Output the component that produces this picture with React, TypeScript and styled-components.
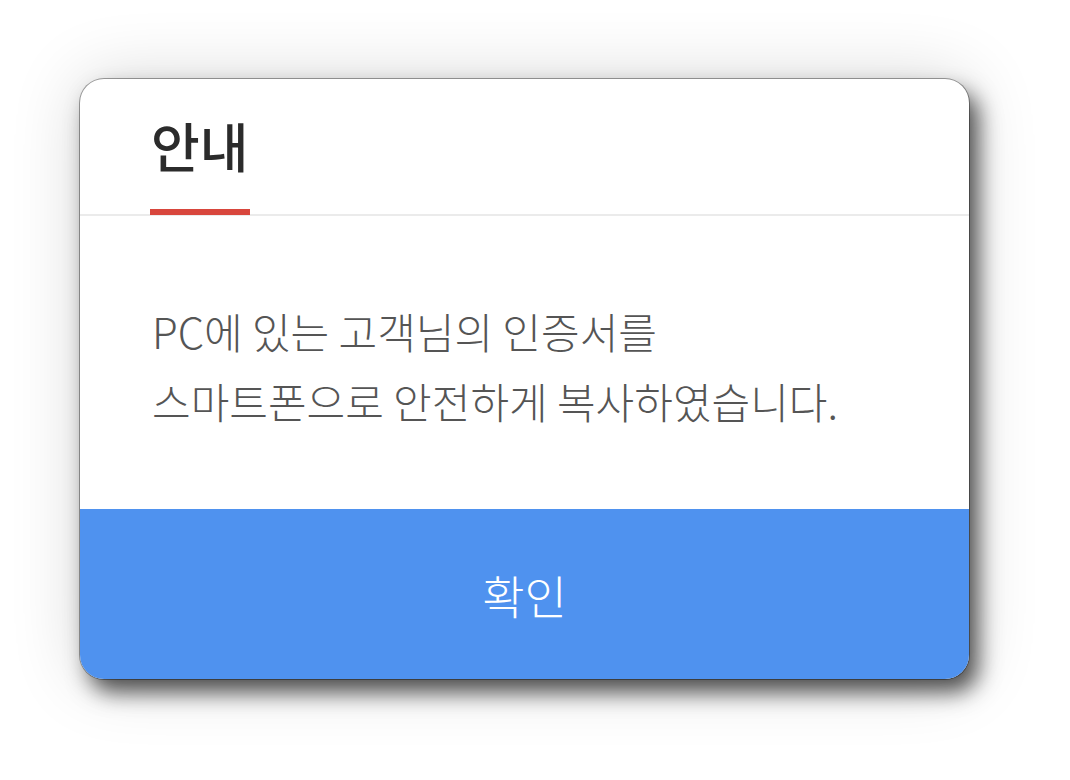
import styled, { createGlobalStyle } from 'styled-components';

const GlobalStyle = createGlobalStyle`
    html, body {
        margin: 0;
        padding: 0;
        background: #fff;
    }
    body {
        font-family: 'Noto Sans CJK KR', 'Noto Sans', sans-serif;
    }
`;

const Page = styled.div`
    width: 1070px;
    height: 780px;
    padding: 79px 0 0 80px;
    box-sizing: border-box;
    background: #fff;
`;

const Dialog = styled.div`
    width: 889px;
    height: 600px;
    border-radius: 24px;
    background: #fff;
    overflow: hidden;
    display: flex;
    flex-direction: column;
    box-shadow:
        0 0 0 1px rgba(0, 0, 0, 0.35),
        9px 13px 22px rgba(0, 0, 0, 0.68),
        0 0 70px rgba(0, 0, 0, 0.16);
`;

const Header = styled.div`
    height: 135px;
    border-bottom: 2px solid #ebebeb;
    display: flex;
    align-items: flex-end;
    padding-left: 70px;
`;

const Tab = styled.div`
    font-size: 53px;
    font-weight: 500;
    line-height: 1;
    color: #2b2b2b;
    padding: 0 1px 37px;
    margin-bottom: -1px;
    border-bottom: 6px solid #d8463d;
`;

const Body = styled.div`
    flex: 1;
    display: flex;
    flex-direction: column;
    justify-content: center;
    padding: 6px 0 0 72px;
`;

const Message = styled.p`
    margin: 0;
    font-size: 42px;
    line-height: 70px;
    color: #555;
    font-weight: 300;
`;

const ConfirmButton = styled.button`
    height: 170px;
    border: none;
    background: #4f92ef;
    color: #fff;
    font-family: inherit;
    font-size: 46px;
    font-weight: 300;
    cursor: pointer;
    padding: 0;
`;

export default function App() {
    return (
        <>
            <GlobalStyle />
            <Page>
                <Dialog>
                    <Header>
                        <Tab>안내</Tab>
                    </Header>
                    <Body>
                        <Message>
                            PC에 있는 고객님의 인증서를
                            <br />
                            스마트폰으로 안전하게 복사하였습니다.
                        </Message>
                    </Body>
                    <ConfirmButton>확인</ConfirmButton>
                </Dialog>
            </Page>
        </>
    );
}
